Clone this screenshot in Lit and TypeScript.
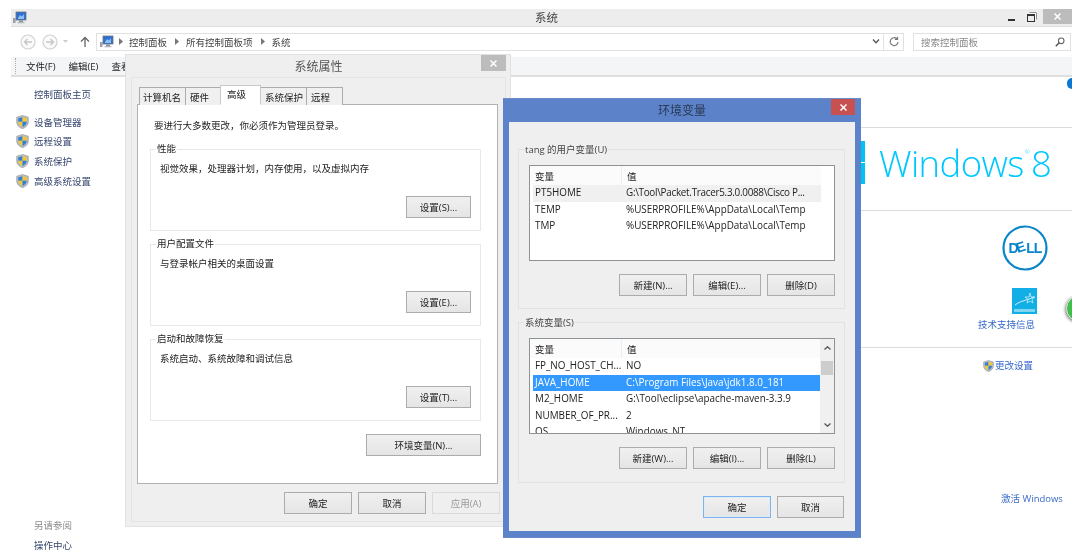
import { LitElement, html, css } from "lit";
import { customElement } from "lit/decorators.js";

const shield = (size = 13) => html`<svg class="shield" width=${size} height=${size + 1} viewBox="0 0 13 14">
  <path d="M6.5.5 12.3 2.2V7c0 3.2-2.5 5.5-5.8 6.7C3.2 12.5.7 10.200.7 7V2.200Z" fill="#b9bcc0" stroke="#8f9398" stroke-width=".6"/>
  <path d="M6.500 2.200 2.300 3.300V6.800H6.500Z" fill="#2f7fd6"/>
  <path d="M6.500 2.200 10.700 3.300V6.800H6.500Z" fill="#f3c92f"/>
  <path d="M2.300 6.800H6.500V11.900C4.100 10.900 2.300 9.200 2.300 6.800Z" fill="#f3c92f"/>
  <path d="M10.700 6.800H6.500V11.900C8.900 10.900 10.700 9.200 10.700 6.800Z" fill="#2f7fd6"/>
</svg>`;

const pcIcon = () => html`<svg width="15" height="14" viewBox="0 0 15 14">
  <rect x="1" y="7" width="2.500" height="5" fill="#9aa0a6"/>
  <rect x="4" y="1" width="10" height="8" fill="#2f6fd0" stroke="#6d7680" stroke-width=".8"/>
  <path d="M6 7 8 4 10 5.500 12 3V8H6Z" fill="#8cc0f5"/>
  <rect x="7" y="9.500" width="4" height="1.500" fill="#8a9097"/>
  <rect x="5.500" y="11" width="7" height="1.300" fill="#b5babf"/>
</svg>`;

const crumbArrow = (cls = "") => html`<svg class="crumb ${cls}" width="4" height="7" viewBox="0 0 4 7"><path d="M0 0 4 3.500 0 7Z" fill="#777"/></svg>`;

const navCircle = (dir: 1 | -1) => html`<svg width="16" height="16" viewBox="0 0 16 16">
  <circle cx="8" cy="8" r="7" fill="#fafafa" stroke="#cfd1d3" stroke-width="1.200"/>
  <path d=${dir < 0 ? "M12 8H4.500M7.500 5 4.500 8 7.500 11" : "M4 8H11.500M8.500 5 11.500 8 8.500 11"} fill="none" stroke="#c4c6c8" stroke-width="1.400"/>
</svg>`;

const closeX = () => html`<svg width="7" height="7" viewBox="0 0 7 7"><path d="M.5.5 6.500 6.500M6.500.5.5 6.500" stroke="#fff" stroke-width="1.500"/></svg>`;

const btn = (t: string, cls = "") => html`<button class="btn ${cls}">${t}</button>`;

type Row = [string, string, string?];

@customElement("app-root")
export class AppRoot extends LitElement {
  static styles = css`
    :host { display: block; position: relative; width: 1078px; height: 560px; overflow: hidden; background: #fff;
      font-family: "Open Sans", "Noto Sans CJK SC", sans-serif; font-size: 9.5px; color: #222; filter: blur(.3px); }
    * { box-sizing: border-box; }
    svg { display: block; flex: none; }

    .main { margin-left: 11px; width: 1061px; height: 560px; padding-top: 9px; display: flex; flex-direction: column; }
    .titlebar { height: 18px; background: #ededed; border-bottom: 1px solid #dcdcdc; display: flex; align-items: center; position: relative; padding-left: 1px; }
    .titlebar .t { position: absolute; left: 524px; top: 2px; font-size: 11.5px; line-height: 14px; color: #444; }
    .winbtns { margin-left: auto; display: flex; align-items: center; height: 17px; align-self: flex-start; }
    .winbtns .min { width: 7px; height: 2px; background: #333; margin: 5px 0 0; }
    .winbtns .max { width: 8px; height: 8px; border: 1px solid #333; border-top-width: 2px; margin: 0 8px 0 12px; box-shadow: 1.500px -1.500px 0 -0.500px #fff, 2px -2px 0 -0.500px #333; }
    .winbtns .x { width: 29px; height: 15px; background: #bcbcbc; align-self: flex-start; display: flex; align-items: center; justify-content: center; }

    .addr { height: 29px; display: flex; align-items: center; padding-left: 9px; }
    .addr .chev { margin: 0 6px 0 5px; }
    .addr .up { margin-left: 6px; }
    .addr .box { height: 18px; width: 808px; margin-left: 6px; border: 1px solid #e1e1e1; display: flex; align-items: center; padding-left: 2px; color: #444; font-size: 9.500px; }
    .addr .crumb { margin: 0 6px 0 5px; }
    .addr .crumb.a2 { margin: 0 7px 0 8px; }
    .addr .crumb.a3 { margin: 0 7px 0 8px; }
    .addr .end { margin-left: auto; display: flex; height: 100%; align-items: center; }
    .addr .drop { width: 14px; }
    .addr .refresh { border-left: 1px solid #e1e1e1; width: 20px; height: 100%; display: flex; align-items: center; justify-content: center; }
    .search { width: 158px; height: 18px; margin-left: 9px; border: 1px solid #e1e1e1; display: flex; align-items: center; padding: 0 5px 0 7px; color: #888; }
    .search svg { margin-left: auto; }

    .menubar { height: 20px; background: #f4f5f7; border-bottom: 2px solid #dfdfdf; display: flex; align-items: center; padding-left: 4px; gap: 13px; margin-top: 1px; }
    .grip { width: 1px; height: 16px; border-left: 1px dotted #aaa; margin-right: -3px; }

    .body { flex: 1; display: grid; grid-template-columns: 850px 1fr; min-height: 0; position: relative; }
    .side { padding: 11px 0 0 5px; display: flex; flex-direction: column; color: #36466d; }
    .side .home { padding-left: 18px; line-height: 13px; margin-bottom: 11px; }
    .side .item { display: flex; align-items: center; gap: 5px; height: 19.600px; }
    .side .foot { margin-top: auto; padding: 0 0 8px 18px; display: flex; flex-direction: column; gap: 7px; line-height: 13px; }
    .side .foot .g { color: #8a8a8a; }

    .right { display: flex; flex-direction: column; overflow: hidden; position: relative; }
    .dot { height: 10px; display: flex; justify-content: flex-end; padding-top: 1px; }
    .dot i { width: 5px; height: 11px; background: #0a78d2; border-radius: 6px 0 0 6px; }
    .sec { border-top: 1px solid #dcdcdc; }
    .sec1 { margin-top: 40px; height: 83px; display: flex; align-items: flex-start; }
    .bars { width: 4px; margin-top: 13px; display: flex; flex-direction: column; gap: 1px; }
    .bars i { height: 21px; background: #00c2f3; display: block; }
    .w8 { margin: 10px 0 0 14px; font-size: 36.500px; line-height: 50px; font-weight: 300; color: #00c8ff; font-family: "Open Sans", sans-serif; letter-spacing: -.6px; white-space: nowrap; display: flex; }
    .w8 sup { font-size: 6px; line-height: 1; margin: 11px 2px 0 1px; }
    .sec2 { height: 137px; position: relative; display: flex; flex-direction: column; align-items: flex-end; padding: 14px 24px 0 0; }
    .estar { width: 25px; height: 26px; background: #12aee6; margin: 17px 11px 0 0; display: flex; align-items: flex-end; justify-content: center; }
    .link { color: #3366cc; line-height: 13px; }
    .sec2 .link { margin: 4px 13px 0 0; }
    .green { position: absolute; right: -21px; top: 84px; width: 27px; height: 27px; border-radius: 50%; background: #3fbf4c; border: 1.500px solid #e8e8e8; box-shadow: -1px 1px 3px #888; }
    .sec3 { flex: 1; display: flex; flex-direction: column; align-items: flex-start; padding: 11px 0 0 122px; }
    .chg { display: flex; align-items: center; gap: 1px; }
    .act { margin: 119px 0 0 18px; color: #3a6ac8; white-space: nowrap; }

    .dlg { position: absolute; }
    .sys { left: 125px; top: 54px; width: 386px; height: 473px; background: #efefef; border: 1px solid #e2e2e2; display: flex; flex-direction: column; padding: 0 4px 4px 5px; }
    .dlg-title { height: 22px; display: flex; align-items: center; justify-content: center; font-size: 12px; color: #555; position: relative; flex: none; }
    .dlg-title .cx { position: absolute; right: 0; top: 0; height: 16px; width: 25px; background: #bcbcbc; display: flex; align-items: center; justify-content: center; }
    .inner { flex: 1; border: 1px solid #e4e4e4; padding: 8px 7px 0 5px; display: flex; flex-direction: column; }
    .tabs { display: flex; height: 19px; padding-left: 2px; align-items: flex-end; position: relative; z-index: 1; margin-bottom: -1px; }
    .tab { height: 18px; border: 1px solid #acacac; border-bottom: none; background: #f0f0f0; padding: 1px 0 0 3px; display: flex; align-items: center; margin-right: -1px; font-size: 9.500px; }
    .tab.w1 { width: 47px; }
    .tab.w2 { width: 37px; padding-left: 4px; }
    .tab.w4 { width: 47px; padding-left: 4px; }
    .tab.w5 { width: 37px; padding-left: 4px; }
    .tab.on { width: 41px; height: 20px; background: #fff; padding: 0 0 3px 6px; margin: 0 -1px 0 -1px; border-color: #c8c8c8; border-bottom: 1px solid #fff; position: relative; z-index: 1; }
    .page { height: 380px; background: #fff; border: 1px solid #b2b2b2; padding: 14px 16px 0 12px; display: flex; flex-direction: column; }
    .page .note { line-height: 13px; padding-left: 4px; margin-bottom: 17px; }
    .gb { border: 1px solid #e8e8e8; position: relative; }
    .gb > .lg { position: absolute; left: 5px; top: -8px; padding: 0 1px; line-height: 13px; background: #fff; white-space: nowrap; }
    .perf { height: 82px; margin-bottom: 13px; padding: 12px 9px 0 9px; display: flex; flex-direction: column; }
    .perf p { margin: 0; line-height: 13px; }
    .perf .btn { margin-top: auto; margin-bottom: 12px; align-self: flex-end; width: 65px; }
    .btn { height: 22px; border: 1px solid #acacac; background: linear-gradient(#f0f0f0, #e5e5e5); font: inherit; color: #222; padding: 0; display: flex; align-items: center; justify-content: center; flex: none; }
    .envbtn { width: 115px; align-self: flex-end; }
    .actions { display: flex; justify-content: flex-end; gap: 6px; }
    .sys .actions { margin-top: 8px; margin-right: -2px; }
    .actions .btn { width: 68px; }
    .btn.dis { background: #efefef; border-color: #dadada; color: #9a9a9a; }
    .btn.def { border-color: #7eb4ea; box-shadow: inset 0 0 0 1px #dcecfb; }

    .env { left: 503px; top: 98px; width: 358px; height: 440px; background: #5c82c9; padding: 0 6px 6px; display: flex; flex-direction: column; border: 1px solid #6b8bc9; border-left-width: 0; border-right-width: 0; }
    .env .dlg-title { height: 23px; color: #2b3a55; padding-bottom: 2px; }
    .env .dlg-title .cx { background: #c75050; width: 24px; top: 0; }
    .envin { flex: 1; background: #efefef; padding: 27px 10px 0 9px; display: flex; flex-direction: column; }
    .envin .gb { border-color: #e2e2e2; padding: 15px 9px 0 10px; display: flex; flex-direction: column; }
    .envin .gb > .lg { background: #efefef; top: -7px; color: #444; }
    .g1 { height: 160px; margin-bottom: 13px; }
    .g2 { height: 161px; }
    .list { background: #fff; border: 1px solid #8e9398; overflow: hidden; position: relative; margin-bottom: 13px; flex: none; height: 96px; padding: 0 0 0 3px; }
    .lh, .lr { display: grid; align-items: center; }
    .lh { height: 19px; background: #fbfbfb; margin-left: -3px; width: 291px; padding-left: 5px; grid-template-columns: 86px 1fr; font-size: 9.500px; }
    .lh span + span { border-left: 1px solid #e6eef7; height: 100%; display: flex; align-items: center; padding-left: 5px; }
    .lr { height: 16.500px; width: 288px; grid-template-columns: 87px 1fr; padding: 0 0 1px 2px; line-height: 15px; font-size: 9.900px; white-space: nowrap; }
    .lr span + span { padding-left: 4px; }
    .lr.sel { background: #3399ff; color: #fff; }
    .lr.hov { background: #f0f0f0; }
    .lr.hov span + span { letter-spacing: -.28px; }
    .scroll { position: absolute; right: 0; top: 0; bottom: 0; width: 14px; background: #f0f0f0; display: flex; flex-direction: column; align-items: center; justify-content: space-between; padding: 7px 0 6px; }
    .scroll b { position: absolute; left: 1px; top: 22px; width: 12px; height: 14px; background: #cdcdcd; }
    .bottom { margin-top: 13px; margin-right: 1px; }
    .actions .btn.w67 { width: 67px; }
  `;

  private list(rows: Row[], sc = false) {
    return html`<div class="list">
      <div class="lh"><span>变量</span><span>值</span></div>
      ${rows.map((r) => html`<div class="lr ${r[2] ?? ""}"><span>${r[0]}</span><span>${r[1]}</span></div>`)}
      ${sc
        ? html`<div class="scroll">
            <svg width="7" height="4" viewBox="0 0 7 4"><path d="M.5 3.500 3.500.8 6.500 3.500" fill="none" stroke="#555" stroke-width="1.300"/></svg>
            <b></b>
            <svg width="7" height="4" viewBox="0 0 7 4"><path d="M.5.5 3.500 3.200 6.500.5" fill="none" stroke="#555" stroke-width="1.300"/></svg>
          </div>`
        : ""}
    </div>`;
  }

  render() {
    const user: Row[] = [
      ["PT5HOME", "G:\\Tool\\Packet.Tracer5.3.0.0088\\Cisco P...", "hov"],
      ["TEMP", "%USERPROFILE%\\AppData\\Local\\Temp"],
      ["TMP", "%USERPROFILE%\\AppData\\Local\\Temp"],
    ];
    const sys: Row[] = [
      ["FP_NO_HOST_CH...", "NO"],
      ["JAVA_HOME", "C:\\Program Files\\Java\\jdk1.8.0_181", "sel"],
      ["M2_HOME", "G:\\Tool\\eclipse\\apache-maven-3.3.9"],
      ["NUMBER_OF_PR...", "2"],
      ["OS", "Windows_NT"],
    ];
    return html`
      <div class="main">
        <div class="titlebar">
          ${pcIcon()}
          <span class="t">系统</span>
          <div class="winbtns"><i class="min"></i><i class="max"></i><span class="x">${closeX()}</span></div>
        </div>
        <div class="addr">
          ${navCircle(-1)}<span style="width:6px"></span>${navCircle(1)}
          <svg class="chev" width="5" height="3" viewBox="0 0 5 3"><path d="M0 0H5L2.500 3Z" fill="#ccc"/></svg>
          <svg class="up" width="10" height="11" viewBox="0 0 10 11"><path d="M5 11V1.500M1 5.500 5 1.500 9 5.500" fill="none" stroke="#666" stroke-width="1.300"/></svg>
          <div class="box">
            ${pcIcon()}
            ${crumbArrow()}<span>控制面板</span>
            ${crumbArrow("a2")}<span>所有控制面板项</span>
            ${crumbArrow("a3")}<span>系统</span>
            <div class="end">
              <svg class="drop" width="7" height="5" viewBox="0 0 14 5"><path d="M4 .5 7 3.800 10 .5" fill="none" stroke="#555" stroke-width="1.300"/></svg>
              <div class="refresh"><svg width="10" height="11" viewBox="0 0 10 11"><path d="M8 3A3.900 3.900 0 1 0 9 6M8.500.8V3.500H5.800" fill="none" stroke="#777" stroke-width="1.200"/></svg></div>
            </div>
          </div>
          <div class="search">搜索控制面板
            <svg width="10" height="10" viewBox="0 0 10 10"><circle cx="6.200" cy="3.800" r="2.800" fill="none" stroke="#666" stroke-width="1.100"/><path d="M4.200 5.800 .8 9.200" stroke="#555" stroke-width="1.500"/></svg>
          </div>
        </div>
        <div class="menubar"><i class="grip"></i><span>文件(F)</span><span>编辑(E)</span><span>查看(V)</span></div>
        <div class="body">
          <div class="side">
            <div class="home">控制面板主页</div>
            ${["设备管理器", "远程设置", "系统保护", "高级系统设置"].map((t) => html`<div class="item">${shield()}<span>${t}</span></div>`)}
            <div class="foot"><span class="g">另请参阅</span><span>操作中心</span></div>
          </div>
          <div class="right">
            <div class="dot"><i></i></div>
            <div class="sec sec1">
              <div class="bars"><i></i><i></i></div>
              <div class="w8">Windows<sup>®</sup>8</div>
            </div>
            <div class="sec sec2">
              <svg width="46" height="46" viewBox="0 0 46 46">
                <circle cx="23" cy="23" r="21.500" fill="none" stroke="#0a85c9" stroke-width="2.200"/>
                <text x="23" y="28" text-anchor="middle" rotate="0 -18 0 0" font-family="Liberation Sans" font-size="14" font-weight="700" letter-spacing="-.9" fill="#0a85c9">DELL</text>
              </svg>
              <div class="estar">
                <svg width="25" height="26" viewBox="0 0 25 26"><path d="M3 17C8 13 13 13 22 9" fill="none" stroke="#fff" stroke-width=".8"/><path d="M18 5 19 9 23 9 20 11.500 21 15 18 13 15 15 16 11.500 13 9 17 9Z" fill="none" stroke="#fff" stroke-width=".6"/><rect x="2" y="21" width="21" height="3" fill="#7fd4f2"/></svg>
              </div>
              <div class="link">技术支持信息</div>
              <i class="green"></i>
            </div>
            <div class="sec sec3">
              <div class="chg">${shield(11)}<span class="link">更改设置</span></div>
              <div class="act">激活 Windows</div>
            </div>
          </div>
        </div>
      </div>

      <div class="dlg sys">
        <div class="dlg-title">系统属性<span class="cx">${closeX()}</span></div>
        <div class="inner">
          <div class="tabs">
            <span class="tab w1">计算机名</span><span class="tab w2">硬件</span><span class="tab on">高级</span><span class="tab w4">系统保护</span><span class="tab w5">远程</span>
          </div>
          <div class="page">
            <div class="note">要进行大多数更改，你必须作为管理员登录。</div>
            <div class="gb perf"><span class="lg">性能</span><p>视觉效果，处理器计划，内存使用，以及虚拟内存</p>${btn("设置(S)...")}</div>
            <div class="gb perf"><span class="lg">用户配置文件</span><p>与登录帐户相关的桌面设置</p>${btn("设置(E)...")}</div>
            <div class="gb perf"><span class="lg">启动和故障恢复</span><p>系统启动、系统故障和调试信息</p>${btn("设置(T)...")}</div>
            <button class="btn envbtn">环境变量(N)...</button>
          </div>
          <div class="actions">${btn("确定")}${btn("取消")}${btn("应用(A)", "dis")}</div>
        </div>
      </div>

      <div class="dlg env">
        <div class="dlg-title">环境变量<span class="cx">${closeX()}</span></div>
        <div class="envin">
          <div class="gb g1"><span class="lg">tang 的用户变量(U)</span>
            ${this.list(user)}
            <div class="actions">${btn("新建(N)...")}${btn("编辑(E)...")}${btn("删除(D)")}</div>
          </div>
          <div class="gb g2"><span class="lg">系统变量(S)</span>
            ${this.list(sys, true)}
            <div class="actions">${btn("新建(W)...")}${btn("编辑(I)...")}${btn("删除(L)")}</div>
          </div>
          <div class="actions bottom">${btn("确定", "def")}${btn("取消", "w67")}</div>
        </div>
      </div>
    `;
  }
}
